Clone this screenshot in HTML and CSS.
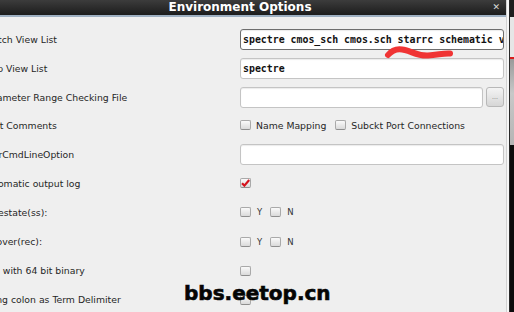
FILE: index.html
```html
<!DOCTYPE html>
<html lang="en">
<head>
    <meta charset="UTF-8">
    <title>Environment Options</title>
    <link rel="stylesheet" href="styles.css">
</head>
<body>

<div class="screen">
    <div class="dialog">
        <div class="titlebar">
            <span class="title">Environment Options</span>
            <span class="close">&#x2715;</span>
        </div>

        <div class="form">
            <div class="label">Switch View List</div>
            <div class="field"><div class="text focused">spectre cmos_sch cmos.sch starrc schematic veriloga</div></div>

            <div class="label">Stop View List</div>
            <div class="field"><div class="text">spectre</div></div>

            <div class="label">Parameter Range Checking File</div>
            <div class="field">
                <div class="text"></div>
                <button class="browse">...</button>
            </div>

            <div class="label">Print Comments</div>
            <div class="field">
                <span class="box"></span><span class="opt">Name Mapping</span>
                <span class="box"></span><span class="opt">Subckt Port Connections</span>
            </div>

            <div class="label">userCmdLineOption</div>
            <div class="field"><div class="text"></div></div>

            <div class="label">Automatic output log</div>
            <div class="field">
                <span class="box checked">
                    <svg width="9" height="8" viewBox="0 0 9 8"><path d="M1 4.2 L3.4 6.6 L8.2 1" fill="none" stroke="#d4121c" stroke-width="2.2"/></svg>
                </span>
            </div>

            <div class="label">savestate(ss):</div>
            <div class="field">
                <span class="box"></span><span class="yn">Y</span>
                <span class="box"></span><span class="yn">N</span>
            </div>

            <div class="label">recover(rec):</div>
            <div class="field">
                <span class="box"></span><span class="yn">Y</span>
                <span class="box"></span><span class="yn">N</span>
            </div>

            <div class="label">Run with 64 bit binary</div>
            <div class="field"><span class="box"></span></div>

            <div class="label">Using colon as Term Delimiter</div>
            <div class="field"><span class="box"></span></div>
        </div>
    </div>

    <div class="sidewin">
        <div class="side-top"></div>
        <div class="side-mid"></div>
        <div class="side-dark"></div>
    </div>
</div>

<!-- red pen mark drawn over the screenshot -->
<svg class="scribble" width="74" height="18" viewBox="0 0 74 18">
    <path d="M5 11 C 9 6, 15 4, 22 6 C 30 8, 34 12, 45 11.5 C 55 11, 60 9, 67 9.5" fill="none" stroke="#f03434" stroke-width="6" stroke-linecap="round"/>
</svg>

<div class="watermark">bbs.eetop.cn</div>

</body>
</html>
```

FILE: styles.css
```css
body {
    margin: 0;
    width: 514px;
    height: 312px;
    overflow: hidden;
    position: relative;
    background-color: #efefef;
    font-family: "DejaVu Sans", sans-serif;
}
.screen {
    display: flex;
    height: 312px;
}
.dialog {
    margin-left: -26px;
    width: 532px;
    flex-shrink: 0;
    background-color: #efefef;
    border-right: 1px solid #d2d2d2;
}
.titlebar {
    height: 15px;
    background: linear-gradient(#3c3c3c, #1c1c1c);
    border-bottom: 2px solid #9eb0c2;
    display: flex;
    justify-content: center;
    align-items: center;
    position: relative;
}
.title {
    color: #ffffff;
    font-weight: bold;
    font-size: 12px;
    line-height: 15px;
}
.close {
    position: absolute;
    right: 6px;
    top: 0;
    color: #d8d8d8;
    font-size: 9px;
    font-weight: bold;
    line-height: 15px;
}
.form {
    display: grid;
    grid-template-columns: 258px 264px;
    grid-template-rows: 29px 29px 28px 28px 30px 28px 30px 29px 29px 29px;
    align-items: center;
    padding: 8px 2px 0 8px;
}
.label {
    font-size: 9.3px;
    color: #262626;
    white-space: nowrap;
}
.field {
    display: flex;
    align-items: center;
}
.text {
    flex: 1;
    min-width: 0;
    height: 21px;
    box-sizing: border-box;
    padding: 0 2px;
    border: 1px solid #c4c4c4;
    border-radius: 3px;
    background-color: #ffffff;
    box-shadow: inset 0 1px 1px rgba(0, 0, 0, 0.08);
    font-family: "DejaVu Sans Mono", monospace;
    font-weight: bold;
    font-size: 9.9px;
    line-height: 19px;
    color: #111111;
    white-space: nowrap;
    overflow: hidden;
}
.text.focused {
    border-color: #6e6e6e;
}
.browse {
    width: 18px;
    height: 20px;
    margin-left: 3px;
    padding: 0;
    border: 1px solid #b8b8b8;
    border-radius: 3px;
    background: linear-gradient(#f4f4f4, #d6d6d6);
    color: #777777;
    font-size: 7px;
    line-height: 14px;
}
.box {
    width: 11px;
    height: 10px;
    box-sizing: border-box;
    border: 1px solid #a9a9a9;
    border-bottom-color: #8e8e8e;
    border-radius: 2px;
    background: linear-gradient(#fafafa, #dadada);
    display: flex;
    align-items: center;
    justify-content: center;
    flex-shrink: 0;
}
.box.checked svg {
    margin-top: -1px;
}
.opt {
    font-size: 9.3px;
    color: #262626;
    margin-left: 5px;
    margin-right: 9px;
}
.yn {
    font-size: 8.5px;
    color: #333333;
    margin-left: 6px;
    margin-right: 8px;
}
.sidewin {
    flex: 1;
    display: flex;
    flex-direction: column;
    border-left: 2px solid #f6f6f6;
    box-shadow: inset 1px 0 0 #2a2a2a;
    padding-left: 1px;
}
.side-top {
    height: 57px;
    background: linear-gradient(#1e1e1e 0, #1e1e1e 17px, #e6e6e6 17px);
    border-bottom: 2px solid #d81c1c;
}
.side-mid {
    height: 86px;
    background: linear-gradient(#9a9a9a, #c8c8c8 40%, #b4b4b4);
}
.side-dark {
    flex: 1;
    background-color: #0c0c0c;
}
.scribble {
    position: absolute;
    left: 383px;
    top: 44px;
}
.watermark {
    position: absolute;
    left: 184px;
    top: 282px;
    font-family: "DejaVu Sans", sans-serif;
    font-weight: bold;
    font-size: 20px;
    line-height: 22px;
    color: #050505;
    -webkit-text-stroke: 0.6px #050505;
}
```
